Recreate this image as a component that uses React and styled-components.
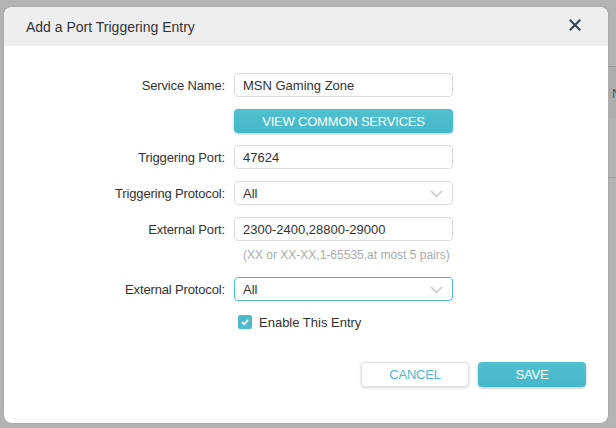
import React, { useState } from "react";
import styled, { createGlobalStyle } from "styled-components";

const GlobalStyle = createGlobalStyle`
  html, body {
    margin: 0;
    padding: 0;
    background: #b3b3b3;
    font-family: "Liberation Sans", Arial, sans-serif;
  }
`;

const teal = "#4cbccd";

const App = () => {
  const [enabled, setEnabled] = useState(true);

  return (
    <>
      <GlobalStyle />
      <Backdrop>
        <Dialog>
          <Header>
            <Title>Add a Port Triggering Entry</Title>
            <CloseButton aria-label="close">
              <svg width="12" height="12" viewBox="0 0 12 12">
                <path
                  d="M1.5 1.5 L10.5 10.5 M10.5 1.5 L1.5 10.5"
                  stroke="#3d4650"
                  strokeWidth="2.2"
                  strokeLinecap="square"
                />
              </svg>
            </CloseButton>
          </Header>

          <Body>
            <Row>
              <Label>Service Name:</Label>
              <Input defaultValue="MSN Gaming Zone" />
            </Row>
            <Row>
              <span />
              <WideButton>VIEW COMMON SERVICES</WideButton>
            </Row>
            <Row>
              <Label>Triggering Port:</Label>
              <Input defaultValue="47624" />
            </Row>
            <Row>
              <Label>Triggering Protocol:</Label>
              <Select>
                All
                <Chevron />
              </Select>
            </Row>
            <Row>
              <Label>External Port:</Label>
              <Input defaultValue="2300-2400,28800-29000" />
            </Row>
            <HintRow>
              <span />
              <Hint>(XX or XX-XX,1-65535,at most 5 pairs)</Hint>
            </HintRow>
            <Row>
              <Label>External Protocol:</Label>
              <Select focused>
                All
                <Chevron />
              </Select>
            </Row>
            <CheckRow>
              <span />
              <CheckLabel onClick={() => setEnabled(!enabled)}>
                <Box checked={enabled}>
                  {enabled && (
                    <svg width="10" height="10" viewBox="0 0 10 10">
                      <path
                        d="M2 5.2 L4.2 7.2 L8 3"
                        stroke="#fff"
                        strokeWidth="1.8"
                        fill="none"
                      />
                    </svg>
                  )}
                </Box>
                Enable This Entry
              </CheckLabel>
            </CheckRow>
          </Body>

          <Footer>
            <CancelButton>CANCEL</CancelButton>
            <SaveButton>SAVE</SaveButton>
          </Footer>
        </Dialog>

        <Behind>
          <BehindHead>
            <BehindText>N</BehindText>
          </BehindHead>
        </Behind>
      </Backdrop>
    </>
  );
};

const Chevron = () => (
  <ChevronIcon width="13" height="8" viewBox="0 0 13 8">
    <path d="M1 1 L6.5 6.5 L12 1" stroke="#c4c4c4" strokeWidth="1.4" fill="none" />
  </ChevronIcon>
);

export default App;

const Backdrop = styled.div`
  display: flex;
  align-items: flex-start;
  width: 616px;
  height: 428px;
  overflow: hidden;
  background: #b3b3b3;
`;

const Dialog = styled.div`
  display: flex;
  flex-direction: column;
  flex: none;
  width: 604px;
  height: 416px;
  margin: 7px 0 0 4px;
  background: #fff;
  border-radius: 8px;
  overflow: hidden;
  box-shadow: 0 0 2px rgba(0, 0, 0, 0.15);
`;

const Header = styled.div`
  display: flex;
  align-items: center;
  justify-content: space-between;
  height: 39px;
  padding: 0 27px 0 22px;
  background: #eeeeee;
`;

const Title = styled.div`
  font-size: 14px;
  color: #333;
  padding-top: 1px;
`;

const CloseButton = styled.div`
  display: flex;
  width: 12px;
  height: 12px;
  margin-top: -3px;
`;

const Body = styled.div`
  display: flex;
  flex-direction: column;
  gap: 12px;
  padding-top: 27px;
  flex: 1;
`;

const Row = styled.div`
  display: grid;
  grid-template-columns: 221px 219px;
  column-gap: 9px;
  align-items: center;
  height: 24px;
`;

const HintRow = styled(Row)`
  height: 16px;
  margin: -6px 0 2px;
`;

const CheckRow = styled(Row)`
  height: 16px;
  margin-top: 1px;
`;

const Label = styled.label`
  text-align: right;
  font-size: 13px;
  letter-spacing: -0.15px;
  color: #333;
`;

const Input = styled.input`
  box-sizing: border-box;
  width: 219px;
  height: 24px;
  padding: 0 8px;
  border: 1px solid #dcdcdc;
  border-radius: 4px;
  font-family: "Liberation Sans", Arial, sans-serif;
  font-size: 13px;
  color: #333;
  outline: none;
`;

const Select = styled.div`
  box-sizing: border-box;
  display: flex;
  align-items: center;
  justify-content: space-between;
  width: 219px;
  height: 24px;
  padding: 0 9px 0 8px;
  border: 1px solid ${(p) => (p.focused ? teal : "#dcdcdc")};
  border-radius: 4px;
  font-size: 13px;
  color: #333;
`;

const ChevronIcon = styled.svg`
  display: block;
  margin-top: 2px;
`;

const Hint = styled.div`
  padding-left: 9px;
  font-size: 12px;
  color: #ababab;
  white-space: nowrap;
`;

const CheckLabel = styled.div`
  display: flex;
  align-items: center;
  gap: 7px;
  padding-left: 4px;
  font-size: 13px;
  color: #333;
  cursor: pointer;
`;

const Box = styled.span`
  box-sizing: border-box;
  display: flex;
  align-items: center;
  justify-content: center;
  width: 14px;
  height: 14px;
  border-radius: 2px;
  background: ${(p) => (p.checked ? teal : "#fff")};
  border: 1px solid ${(p) => (p.checked ? teal : "#ccc")};
`;

const BaseButton = styled.div`
  box-sizing: border-box;
  display: flex;
  align-items: center;
  justify-content: center;
  height: 24px;
  border-radius: 4px;
  font-size: 13px;
  letter-spacing: -0.2px;
  cursor: pointer;
`;

const WideButton = styled(BaseButton)`
  width: 219px;
  color: #fff;
  background: linear-gradient(#50c0ce, #45b8cb);
  box-shadow: 0 1px 3px rgba(0, 0, 0, 0.25);
`;

const Footer = styled.div`
  display: flex;
  justify-content: flex-end;
  gap: 9px;
  padding: 0 22px 36px 0;
`;

const CancelButton = styled(BaseButton)`
  width: 108px;
  height: 25px;
  padding-bottom: 1px;
  color: ${teal};
  background: #fff;
  border: 1px solid #e4e4e4;
  box-shadow: 0 1px 3px rgba(0, 0, 0, 0.18);
`;

const SaveButton = styled(BaseButton)`
  width: 108px;
  height: 25px;
  padding-bottom: 1px;
  color: #fff;
  background: linear-gradient(#50c0ce, #45b8cb);
  box-shadow: 0 1px 3px rgba(0, 0, 0, 0.25);
`;

const Behind = styled.div`
  display: flex;
  flex-direction: column;
  flex: 1;
  margin-top: 66px;
  height: 110px;
  border-top: 1px solid #9c9c9c;
  border-bottom: 1px solid #9c9c9c;
`;

const BehindHead = styled.div`
  display: flex;
  align-items: center;
  height: 52px;
  background: #adadad;
`;

const BehindText = styled.span`
  padding-left: 4px;
  font-size: 13px;
  color: #555;
`;
